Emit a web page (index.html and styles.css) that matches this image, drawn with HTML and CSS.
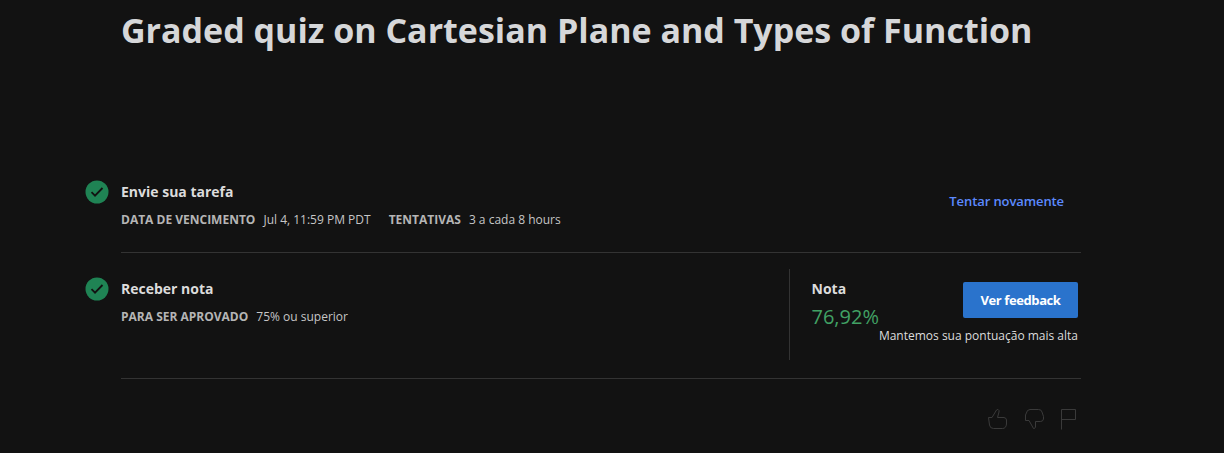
FILE: index.html
```html
<!DOCTYPE html>
<html lang="pt">
<head>
<meta charset="utf-8">
<title>Graded quiz</title>
<link rel="stylesheet" href="styles.css">
</head>
<body>
<main class="page">
<h1 class="title">Graded quiz on Cartesian Plane and Types of Function</h1>
<section class="row submit">
<svg class="check" viewBox="0 0 24 24"><circle cx="12" cy="12" r="11.5"/><path d="M6.500 12.200l3.500 3.500 7.500-7.700"/></svg>
<div class="info">
<h2 class="heading">Envie sua tarefa</h2>
<p class="meta"><b class="label due">DATA DE VENCIMENTO</b><span class="date">Jul 4, 11:59 PM PDT</span><b class="label tries">TENTATIVAS</b><span>3 a cada 8 hours</span></p>
</div>
<a class="retry">Tentar novamente</a>
</section>
<section class="row grade">
<svg class="check" viewBox="0 0 24 24"><circle cx="12" cy="12" r="11.5"/><path d="M6.500 12.200l3.500 3.500 7.500-7.700"/></svg>
<div class="info">
<h2 class="heading">Receber nota</h2>
<p class="meta"><b class="label pass">PARA SER APROVADO</b><span>75% ou superior</span></p>
</div>
<div class="result">
<div class="score"><h2 class="heading">Nota</h2><div class="percent">76,92%</div></div>
<div class="feedback"><button class="button">Ver feedback</button><p class="note">Mantemos sua pontuação mais alta</p></div>
</div>
</section>
<footer class="actions">
<svg class="icon" viewBox="0 0 20 22"><path d="M1.500 9.500H5L9.500 2Q11 .5 12 2.500V4L10.500 9.500H17Q19.500 10 19.500 12V16Q19 20.500 15.500 20.500H6.500Q3 20.500 2.500 17z"/></svg>
<svg class="icon" viewBox="0 0 20 22"><path d="M1.500 12.500V7L3.500 2.500L6 1.500H14.500Q17.500 1.500 18 4L19.500 8.500V11Q19 13.500 16.500 13.500H11.500V19L10.500 20.500H9.500L5 12.500z"/></svg>
<svg class="icon flag" viewBox="0 0 16 22"><path d="M.5 21.500V1.500H14.500V11.500H.5"/></svg>
</footer>
</main>
</body>
</html>
```
FILE: styles.css
```css
* { box-sizing: border-box; }
body { margin: 0; background: #121212; color: #dcdcdc; font: 12px/18px "Open Sans", sans-serif; }
h1, h2, p { margin: 0; }
.page { width: 960px; height: 453px; margin-left: 121px; }
.title { height: 156px; padding-top: 6px; font-size: 34px; line-height: 48px; color: #d6d7d9; white-space: nowrap; }
.row { display: flex; position: relative; border-bottom: 1px solid #333; }
.submit { height: 97px; padding-top: 24px; }
.grade { height: 126px; padding-top: 16px; }
.check { position: absolute; left: -36px; top: 24px; width: 24px; height: 24px; fill: #1f8354; }
.check path { fill: none; stroke: #121212; stroke-width: 1.8; }
.info { flex: 1; }
.grade .info { padding-top: 8px; }
.heading { font-size: 14px; line-height: 24px; }
.meta { display: flex; margin-top: 6px; line-height: 20px; color: #c6c6c6; white-space: nowrap; }
.label { color: #b5b5b5; margin-right: 8px; }
.date { margin-right: 18px; }
.retry { margin: 9px 17px 0 0; height: 24px; line-height: 24px; font-size: 13px; font-weight: 600; letter-spacing: -.1px; color: #5c8aff; }
.result { display: flex; width: 292px; height: 91px; padding: 8px 3px 0 21.500px; border-left: 1px solid #333; }
.score { width: 67px; }
.percent { font-size: 20px; line-height: 32px; color: #41a164; }
.feedback { display: flex; flex-direction: column; align-items: flex-end; flex: 1; padding-top: 5px; }
.button { width: 115px; height: 36px; border: 0; border-radius: 2px; background: #2a73cc; color: #fff; font: 700 13px "Open Sans", sans-serif; letter-spacing: -.4px; padding: 0; }
.note { white-space: nowrap; margin-top: 9px; }
.actions { display: flex; justify-content: flex-end; gap: 17px; padding: 29px 4px 0 0; }
.icon { width: 20px; height: 22px; fill: none; stroke: #3a3a3a; }
.flag { width: 16px; }
```
